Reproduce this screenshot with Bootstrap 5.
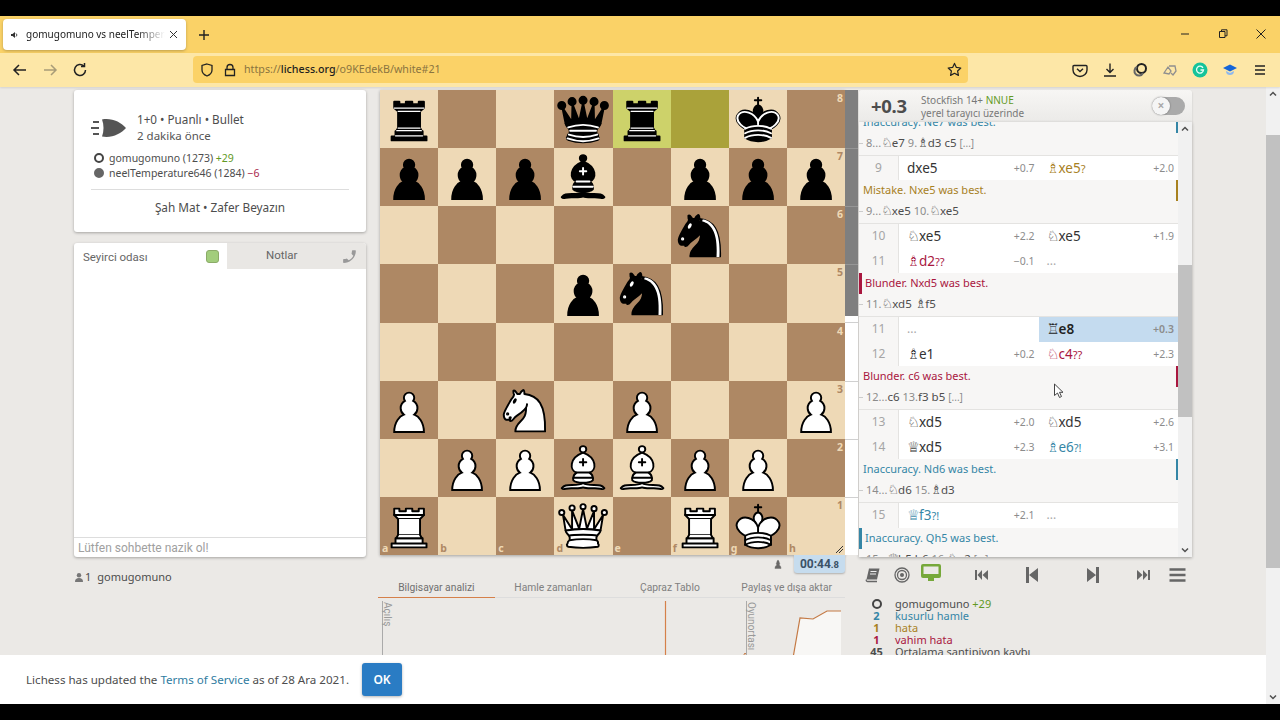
<!DOCTYPE html>
<html lang="tr">
<head>
<meta charset="UTF-8">
<meta name="viewport" content="width=device-width, initial-scale=1.0">
<title>gomugomuno vs neelTemperature646</title>
<link href="https://cdn.jsdelivr.net/npm/bootstrap@5.3.0/dist/css/bootstrap.min.css" rel="stylesheet">
<style>
html,body{margin:0;height:720px;overflow:hidden;background:#000}
body{font-family:"Noto Sans",sans-serif;font-size:12px;color:#4d4d4d}
.win{width:1280px;height:720px;padding:16px 0;background:#000}
/* browser chrome */
.tabbar{height:37px;background:#fad267;padding:3px 3px 0}
.br-tab{width:183px;height:31px;background:#fff;border-radius:4px;box-shadow:0 1px 3px rgba(0,0,0,.25);padding:0 8px;color:#222;font-size:10px}
.br-title{width:139px;overflow:hidden;white-space:nowrap;-webkit-mask-image:linear-gradient(90deg,#000 80%,transparent);mask-image:linear-gradient(90deg,#000 80%,transparent);margin-left:7px;font-size:10px}
.plus{margin-left:11px;width:14px}
.winbtns{margin-left:auto;gap:24px;padding-right:9px}
.winbtns svg{display:block}
.toolbar{height:34px;background:#fde7a7;padding:3px 0 4px 12px;box-shadow:0 1px 2px rgba(0,0,0,.1);position:relative;z-index:2}
.tool-left{width:181px;gap:14px}
.urlbar{width:775px;height:27px;background:#fbd267;border-radius:4px;padding:0 5px 0 6px;font-size:10.7px;color:#8a7440}
.urlbar b{font-weight:500;color:#1e1e1e}
.urltext{margin-left:7px}
.tool-right{margin-left:104px;gap:14px}
.tool-right svg{display:block}
/* page */
.viewport{height:617px}
.pagearea{width:1266px;height:617px;background:#ebe9e6;position:relative;overflow:hidden;padding:3px 0 0 74px}
.pagescroll{width:14px;height:617px;background:#f1f1f1;padding-top:48px;position:relative}
.pagethumb{height:433px;background:#c1c1c1}
.sc-up,.sc-down{position:absolute;left:3px;width:8px;height:8px;line-height:0}
.sc-up{top:3px}.sc-down{bottom:3px}
.col-left{width:292px;margin-right:14px}
.panel{border:0;border-radius:3px;background:#fff;box-shadow:0 1px 3px rgba(0,0,0,.3)}
.meta{height:142px;padding:21px 17px 0}
.meta-head{gap:10px}
.meta-l1{font-size:11.7px;line-height:16px;color:#4d4d4d}
.meta-l2{font-size:11.5px;line-height:17px;color:#555}
.meta-pl{margin-top:7px;font-size:10.5px;line-height:15px;color:#4d4d4d;gap:0}
.dot{display:inline-block;width:10px;height:10px;border-radius:50%;border:2px solid #444;margin:0 5px 0 3px;vertical-align:-1px}
.dot.blk{background:#666;border-color:#666}
.up{color:#629924}.dn{color:#a9284d}
.meta-res{border-top:1px solid #ddd;margin-top:8px;padding-top:9px;text-align:center;font-size:11.8px;color:#4d4d4d}
.chat{height:314px;margin-top:11px}
.chat-tabs{height:26px;font-family:Roboto,sans-serif;font-size:11.5px;color:#666}
.chat-on{width:153px;padding:3px 8px 0 9px}
.chat-on .chk{margin-top:-3px}
.chat-off{flex:1;background:#e9e7e4;padding:0 8px 0 39px;border-top-right-radius:3px}
.chk{width:13px;height:13px;background:#a2cd7c;border:1px solid #8bab68;border-radius:3px}
.chat-body{flex:1}
.chat-in{height:20px;border-top:1px solid #ddd;padding-left:4px;font-family:Roboto,sans-serif;font-size:12px;line-height:20px;color:#a0a0a0}
.watchers{margin-top:12px;font-size:11px;color:#4d4d4d;gap:6px;line-height:16px;padding-left:1px}
.col-mid{width:465px}
.board{display:grid;grid-template-columns:repeat(8,1fr);grid-template-rows:repeat(8,1fr);width:465px;height:465px;box-shadow:0 1px 3px rgba(0,0,0,.3)}
.sq{position:relative;line-height:0}
.sq svg{width:100%;height:100%}
.sq-l{background:#eed9b6}.sq-d{background:#ae8864}
.sq-hl{background:#cdd26a}.sq-hd{background:#aaa23a}
.co{position:absolute;font-size:10.5px;font-weight:700;line-height:11px;font-family:"Noto Sans",sans-serif}
.co-r{right:2px;top:3px}.co-f{left:2px;bottom:1px}
.sq-l .co{color:#ae8864}.sq-d .co{color:#eed9b6}
.sq-hd .co{color:#eed9b6}
.grip{position:absolute;right:1px;bottom:1px}
.clockrow{height:18px;justify-content:flex-end}
.clockbox{width:51px;height:18px;background:#c6dcee;border-radius:0 0 3px 3px;font-family:Roboto,sans-serif;font-weight:700;font-size:12px;color:#3b5166;text-align:center;line-height:18px;box-shadow:0 1px 2px rgba(0,0,0,.25);margin-left:10px}
.clockbox small{font-size:9.5px}
.ub-tabs{margin:7px 0 0 -2px;width:467px;height:18px;border-bottom:1px solid #ddd;font-family:Roboto,sans-serif;font-size:10.3px;color:#808080}
.ub-tab{width:25%;text-align:center;height:18px;line-height:16px}
.ub-tab.on{border-bottom:1px solid #d5804a;color:#6f6f6f}
.chart{display:block;margin-left:-2px}
.col-gauge{width:13px;height:465px;background:#fff;margin-right:1px;position:relative}
.gauge-b{height:226px;background:#7f7f7f}
.gt{position:absolute;left:0;right:0;height:1px;background:rgba(170,170,170,.55)}
.col-right{width:333px}
.ceval{height:32px;background:linear-gradient(#f7f6f4,#ebeae8);padding:0 7px 0 12px;border-radius:3px 3px 0 0;box-shadow:0 1px 2px rgba(0,0,0,.18)}
.pearl{font-size:18.5px;font-weight:700;color:#4d4d4d;width:50px;letter-spacing:-.3px}
.cv-info{font-size:10px;line-height:13px;color:#787878;padding-top:1px}
.cv-info em{font-style:normal;color:#629924}
.toggle{margin-left:auto;width:33px;height:18px;border-radius:9px;background:#aaa;position:relative}
.toggle span{position:absolute;left:0;top:0;width:18px;height:18px;border-radius:50%;background:#f5f5f5;color:#aaa;text-align:center;font-size:12px;line-height:17px;font-weight:700;box-shadow:0 0 2px rgba(0,0,0,.4)}
.mv-wrap{height:435px;box-shadow:0 1px 3px rgba(0,0,0,.3)}
.mv-list{width:319px;height:435px;overflow:hidden;background:#fff}
.mv-bar{width:14px;height:435px;background:#f1f1f1;position:relative;padding-top:143px}
.mv-thumb{height:152px;background:#c1c1c1}
.mv-row{height:24.5px;line-height:24px;font-size:13.5px;color:#333}
.mv-i{width:40px;background:#f7f6f5;border-right:1px solid #e4e3e1;text-align:center;font-size:12px;color:#a5a5a5}
.mv-m{width:139.5px;padding:0 4px 0 8px;justify-content:space-between}
.mv-m i{font-style:normal;font-size:10.5px;color:#8c8c8c}
.mv-m.cur{background:#c4dbef;font-weight:600;color:#222}
.mv-m.dots{color:#aaa;font-size:12px}
.fig{font-family:"DejaVu Sans",sans-serif;font-size:14.5px;font-weight:400;line-height:0;letter-spacing:-1px}
.cur .fig{font-weight:700}
.q{font-size:11px}
.c-in{color:#3586a6}.c-mi{color:#a8811f}.c-bl{color:#a9173f}
.cm{height:44px;background:#f7f6f5;border-bottom:1px solid #e4e3e1;font-size:11px}
.cm-first{margin-top:-10.5px}
.cm-note{height:21px;line-height:20px;padding-left:4px}
.cm-note.lb{border-left:3px solid;padding-left:3px}
.cm-note.rb{border-right:2px solid}
.cm-var{position:relative;padding-left:7px;line-height:20px;font-size:11.5px;color:#4d4d4d}
.cm-var::before{content:"";position:absolute;left:0;top:10px;width:4px;height:1px;background:#ccc}
.cm-var span.n{color:#8c8c8c;font-size:11px}
.cm-var span.o{color:#8c8c8c;font-size:10px}
.cm-var .fig{font-size:13px}
.ctrl{height:35px;padding:0 5px 0 6px;margin-top:1px;width:319px;position:relative}
.ctrl svg{position:absolute;top:9px}
.summary{padding:5px 0 0 11px;font-size:11px;line-height:12px;height:70px;overflow:hidden}
.sum-n{width:13px;margin-right:12px;text-align:center;font-weight:700;flex:none}
.banner{position:absolute;left:0;right:0;bottom:0;height:49px;background:#fff;padding-left:26px;font-size:11.6px;color:#4d4d4d;z-index:5}
.banner a{color:#2f7c9f;text-decoration:none}
.ok-btn{margin-left:13px;width:40px;height:33px;padding:0;font-size:12px;font-weight:600;background:#2a7cc4;border:0;border-radius:3px;box-shadow:0 1px 3px rgba(0,0,0,.3)}
.pointer{position:absolute;left:1053px;top:296px;z-index:4;line-height:0}
</style>
</head>
<body>
<svg width="0" height="0" class="position-absolute">
<defs>
<g id="wP"><path d="M22.500 9c-2.210 0-4 1.790-4 4 0 .89.290 1.710.780 2.380C17.330 16.500 16 18.590 16 21c0 2.030.940 3.840 2.410 5.030-3 1.060-7.410 5.550-7.410 13.470h23c0-7.920-4.410-12.410-7.410-13.470 1.470-1.190 2.410-3 2.410-5.030 0-2.410-1.330-4.500-3.280-5.620.49-.67.780-1.490.780-2.380 0-2.210-1.790-4-4-4z" fill="#fff" stroke="#000" stroke-width="1.500" stroke-linecap="round"/></g>
<g id="bP"><path d="M22.500 9c-2.210 0-4 1.790-4 4 0 .89.290 1.710.780 2.380C17.330 16.500 16 18.590 16 21c0 2.030.940 3.840 2.410 5.030-3 1.060-7.410 5.550-7.410 13.470h23c0-7.920-4.410-12.410-7.410-13.470 1.470-1.190 2.410-3 2.410-5.030 0-2.410-1.330-4.500-3.280-5.620.49-.67.780-1.490.780-2.380 0-2.210-1.790-4-4-4z" fill="#000" stroke="#000" stroke-width="1.500" stroke-linecap="round"/></g>
<g id="wR" fill="#fff" fill-rule="evenodd" stroke="#000" stroke-width="1.500" stroke-linecap="round" stroke-linejoin="round">
<path d="M9 39h27v-3H9v3zM12 36v-4h21v4H12zM11 14V9h4v2h5V9h5v2h5V9h4v5" stroke-linecap="butt"/>
<path d="M34 14l-3 3H14l-3-3"/><path d="M31 17v12.500H14V17" stroke-linecap="butt" stroke-linejoin="miter"/>
<path d="M31 29.500l1.500 2.500h-20l1.500-2.500"/><path d="M11 14h23" fill="none" stroke-linejoin="miter"/></g>
<g id="bR" fill="#000" fill-rule="evenodd" stroke="#000" stroke-width="1.500" stroke-linecap="round" stroke-linejoin="round">
<path d="M9 39h27v-3H9v3zM12.500 32l1.500-2.500h17l1.500 2.500h-20zM12 36v-4h21v4H12z" stroke-linecap="butt"/>
<path d="M14 29.500v-13h17v13H14z" stroke-linecap="butt" stroke-linejoin="miter"/>
<path d="M14 16.500L11 14h23l-3 2.500H14zM11 14V9h4v2h5V9h5v2h5V9h4v5H11z" stroke-linecap="butt"/>
<path d="M12 35.500h21M13 31.500h19M14 29.500h17M14 16.500h17M11 14h23" fill="none" stroke="#fff" stroke-width="1" stroke-linejoin="miter"/></g>
<g id="wN" fill="none" fill-rule="evenodd" stroke="#000" stroke-width="1.500" stroke-linecap="round" stroke-linejoin="round">
<path d="M22 10c10.500 1 16.500 8 16 29H15c0-9 10-6.500 8-21" fill="#fff"/>
<path d="M24 18c.38 2.910-5.550 7.370-8 9-3 2-2.820 4.340-5 4-1.042-.94 1.410-3.040 0-3-1 0 .19 1.230-1 2-1 0-4.003 1-4-4 0-2 6-12 6-12s1.890-1.900 2-3.500c-.73-.994-.5-2-.5-3 1-1 3 2.500 3 2.500h2s.78-1.992 2.500-3c1 0 1 3 1 3" fill="#fff"/>
<path d="M9.500 25.500a.5.5 0 1 1-1 0 .5.5 0 1 1 1 0z" fill="#000"/>
<path d="M15 15.500a.5 1.500 0 1 1-1 0 .5 1.500 0 1 1 1 0z" transform="rotate(30 14.500 15.500)" fill="#000"/></g>
<g id="bN" fill="none" fill-rule="evenodd" stroke="#000" stroke-width="1.500" stroke-linecap="round" stroke-linejoin="round">
<path d="M22 10c10.500 1 16.500 8 16 29H15c0-9 10-6.500 8-21" fill="#000"/>
<path d="M24 18c.38 2.910-5.550 7.370-8 9-3 2-2.820 4.340-5 4-1.042-.94 1.410-3.040 0-3-1 0 .19 1.230-1 2-1 0-4.003 1-4-4 0-2 6-12 6-12s1.890-1.900 2-3.500c-.73-.994-.5-2-.5-3 1-1 3 2.500 3 2.500h2s.78-1.992 2.500-3c1 0 1 3 1 3" fill="#000"/>
<path d="M9.500 25.500a.5.5 0 1 1-1 0 .5.5 0 1 1 1 0z" fill="#fff" stroke="#fff"/>
<path d="M15 15.500a.5 1.500 0 1 1-1 0 .5 1.500 0 1 1 1 0z" transform="rotate(30 14.500 15.500)" fill="#fff" stroke="#fff"/>
<path d="M24.550 10.400l-.45 1.450.5.15c3.150 1 5.650 2.490 7.900 6.750S35.750 29.060 35.250 39l-.05.5h2.250l.05-.5c.5-10.060-.88-16.850-3.250-21.340-2.370-4.490-5.790-6.640-9.190-7.160l-.51-.1z" fill="#fff" stroke="none"/></g>
<g id="wB" fill="none" fill-rule="evenodd" stroke="#000" stroke-width="1.500" stroke-linecap="round" stroke-linejoin="round">
<g fill="#fff" stroke-linecap="butt">
<path d="M9 36c3.390-.97 10.110.43 13.500-2 3.390 2.430 10.110 1.030 13.500 2 0 0 1.650.54 3 2-.68.97-1.650.99-3 .5-3.390-.97-10.110.46-13.500-1-3.390 1.460-10.110.03-13.500 1-1.350.49-2.320.47-3-.5 1.350-1.460 3-2 3-2z"/>
<path d="M15 32c2.500 2.500 12.500 2.500 15 0 .5-1.500 0-2 0-2 0-2.500-2.500-4-2.500-4 5.500-1.500 6-11.500-5-15.500-11 4-10.500 14-5 15.500 0 0-2.500 1.500-2.500 4 0 0-.5.5 0 2z"/>
<path d="M25 8a2.500 2.500 0 1 1-5 0 2.500 2.500 0 1 1 5 0z"/></g>
<path d="M17.500 26h10M15 30h15m-7.500-14.500v5M20 18h5" stroke-linejoin="miter"/></g>
<g id="bB" fill="none" fill-rule="evenodd" stroke="#000" stroke-width="1.500" stroke-linecap="round" stroke-linejoin="round">
<g fill="#000" stroke-linecap="butt">
<path d="M9 36c3.390-.97 10.110.43 13.500-2 3.390 2.430 10.110 1.030 13.500 2 0 0 1.650.54 3 2-.68.97-1.650.99-3 .5-3.390-.97-10.110.46-13.500-1-3.390 1.460-10.110.03-13.500 1-1.350.49-2.320.47-3-.5 1.350-1.460 3-2 3-2z"/>
<path d="M15 32c2.500 2.500 12.500 2.500 15 0 .5-1.500 0-2 0-2 0-2.500-2.500-4-2.500-4 5.500-1.500 6-11.500-5-15.500-11 4-10.500 14-5 15.500 0 0-2.500 1.500-2.500 4 0 0-.5.5 0 2z"/>
<path d="M25 8a2.500 2.500 0 1 1-5 0 2.500 2.500 0 1 1 5 0z"/></g>
<path d="M17.500 26h10M15 30h15m-7.500-14.500v5M20 18h5" stroke="#fff" stroke-linejoin="miter"/></g>
<g id="wQ" fill="#fff" fill-rule="evenodd" stroke="#000" stroke-width="1.500" stroke-linejoin="round">
<path d="M8 12a2 2 0 1 1-4 0 2 2 0 1 1 4 0zm16.500-4.500a2 2 0 1 1-4 0 2 2 0 1 1 4 0zM41 12a2 2 0 1 1-4 0 2 2 0 1 1 4 0zM16 8.500a2 2 0 1 1-4 0 2 2 0 1 1 4 0zM33 9a2 2 0 1 1-4 0 2 2 0 1 1 4 0z"/>
<path d="M9 26c8.500-1.500 21-1.500 27 0l2-12-7 11V11l-5.500 13.500-3-15-3 15-5.500-14V25L7 14l2 12z" stroke-linecap="butt"/>
<path d="M9 26c0 2 1.500 2 2.500 4 1 1.500 1 1 .5 3.500-1.500 1-1.500 2.500-1.500 2.500-1.500 1.500.5 2.500.5 2.500 6.500 1 16.500 1 23 0 0 0 1.500-1 0-2.500 0 0 .5-1.500-1-2.500-.5-2.500-.5-2 .5-3.500 1-2 2.500-2 2.500-4-8.500-1.500-18.500-1.500-27 0z" stroke-linecap="butt"/>
<path d="M11.500 30c3.500-1 18.500-1 22 0M12 33.500c6-1 15-1 21 0" fill="none"/></g>
<g id="bQ" fill="#000" fill-rule="evenodd" stroke="#000" stroke-width="1.500" stroke-linecap="round" stroke-linejoin="round">
<circle cx="6" cy="12" r="2.750"/><circle cx="14" cy="9" r="2.750"/><circle cx="22.500" cy="8" r="2.750"/><circle cx="31" cy="9" r="2.750"/><circle cx="39" cy="12" r="2.750"/>
<path d="M9 26c8.500-1.500 21-1.500 27 0l2.500-12.500L31 25l-.3-14.100-5.200 13.600-3-14.500-3 14.500-5.200-13.600L14 25 6.500 13.500 9 26z" stroke-linecap="butt"/>
<path d="M9 26c0 2 1.500 2 2.500 4 1 1.500 1 1 .5 3.500-1.500 1-1.500 2.500-1.500 2.500-1.500 1.500.5 2.500.5 2.500 6.500 1 16.500 1 23 0 0 0 1.500-1 0-2.500 0 0 .5-1.500-1-2.500-.5-2.500-.5-2 .5-3.500 1-2 2.500-2 2.500-4-8.500-1.500-18.500-1.500-27 0z" stroke-linecap="butt"/>
<path d="M11 38.500a35 35 1 0 0 23 0" fill="none" stroke-linecap="butt"/>
<path d="M11 29a35 35 1 0 1 23 0M12.500 31.500h20M11.500 34.500a35 35 1 0 0 22 0M10.500 37.500a35 35 1 0 0 24 0" fill="none" stroke="#fff"/></g>
<g id="wK" fill="none" fill-rule="evenodd" stroke="#000" stroke-width="1.500" stroke-linecap="round" stroke-linejoin="round">
<path d="M22.500 11.630V6M20 8h5" stroke-linejoin="miter"/>
<path d="M22.500 25s4.500-7.500 3-10.500c0 0-1-2.500-3-2.500s-3 2.500-3 2.500c-1.500 3 3 10.500 3 10.500" fill="#fff" stroke-linecap="butt" stroke-linejoin="miter"/>
<path d="M12.500 37c5.500 3.500 14.500 3.500 20 0v-7s9-4.500 6-10.500c-4-6.500-13.500-3.500-16 4V27v-3.500c-2.500-7.500-12-10.500-16-4-3 6 6 10.500 6 10.500v7" fill="#fff"/>
<path d="M12.500 30c5.500-3 14.500-3 20 0m-20 3.500c5.500-3 14.500-3 20 0m-20 3.500c5.500-3 14.500-3 20 0"/></g>
<g id="bK" fill="none" fill-rule="evenodd" stroke="#000" stroke-width="1.500" stroke-linecap="round" stroke-linejoin="round">
<path d="M22.500 11.630V6" stroke-linejoin="miter"/>
<path d="M22.500 25s4.500-7.500 3-10.500c0 0-1-2.500-3-2.500s-3 2.500-3 2.500c-1.500 3 3 10.500 3 10.500" fill="#000" stroke-linecap="butt" stroke-linejoin="miter"/>
<path d="M12.500 37c5.500 3.500 14.500 3.500 20 0v-7s9-4.500 6-10.500c-4-6.500-13.500-3.500-16 4V27v-3.500c-2.500-7.500-12-10.500-16-4-3 6 6 10.500 6 10.500v7" fill="#000"/>
<path d="M20 8h5" stroke-linejoin="miter"/>
<path d="M32 29.500s8.500-4 6.030-9.650C34.150 14 25 18 22.500 24.500v2.100-2.100C20 18 10.850 14 6.970 19.850 4.500 25.500 13 29.500 13 29.500" stroke="#fff"/>
<path d="M12.500 30c5.500-3 14.500-3 20 0m-20 3.500c5.500-3 14.500-3 20 0m-20 3.500c5.500-3 14.500-3 20 0" stroke="#fff"/></g>
</defs>
</svg>

<div class="win">
  <!-- browser tabs -->
  <div class="tabbar d-flex align-items-start">
    <div class="br-tab d-flex align-items-center">
      <svg width="8" height="8" viewBox="0 0 8 8"><path d="M0 3h1.500L4 1v6L1.500 5H0z" fill="#333"/><path d="M5 2.500c1 .8 1 2.200 0 3" fill="none" stroke="#333"/></svg>
      <span class="br-title">gomugomuno vs neelTemperature646</span>
      <svg class="ms-auto" width="9" height="9" viewBox="0 0 9 9"><path d="M1 1l7 7M8 1L1 8" stroke="#333" stroke-width="1"/></svg>
    </div>
    <svg class="plus" style="margin-top:9px" width="14" height="14" viewBox="0 0 14 14"><path d="M7 2v10M2 7h10" stroke="#222" stroke-width="1.400"/></svg>
    <div class="winbtns d-flex" style="margin-top:10px">
      <svg width="14" height="10" viewBox="0 0 14 10"><path d="M3 5h8" stroke="#222"/></svg>
      <svg width="14" height="10" viewBox="0 0 14 10"><path d="M3.500 2.500h5.500v6H3.500zM5.500 2.500V.8h5.500v6H9" fill="none" stroke="#222"/></svg>
      <svg width="14" height="10" viewBox="0 0 14 10"><path d="M2.500 .5l9 9M11.500 .5l-9 9" stroke="#222"/></svg>
    </div>
  </div>
  <!-- navigation toolbar -->
  <div class="toolbar d-flex align-items-center">
    <div class="tool-left d-flex">
      <svg width="16" height="16" viewBox="0 0 16 16"><path d="M14 8H2M7 3L2 8l5 5" fill="none" stroke="#222" stroke-width="1.500"/></svg>
      <svg width="16" height="16" viewBox="0 0 16 16"><path d="M2 8h12M9 3l5 5-5 5" fill="none" stroke="#a89c78" stroke-width="1.500"/></svg>
      <svg width="16" height="16" viewBox="0 0 16 16"><path d="M13.500 8a5.500 5.500 0 1 1-1.700-4M12.500 1v3.500H9" fill="none" stroke="#222" stroke-width="1.500"/></svg>
    </div>
    <div class="urlbar d-flex align-items-center">
      <svg width="16" height="16" viewBox="0 0 16 16"><path d="M8 2l5 1.500V8c0 3-2.500 5-5 6-2.500-1-5-3-5-6V3.500z" fill="none" stroke="#222" stroke-width="1.300"/></svg>
      <svg class="ms-2" width="14" height="14" viewBox="0 0 14 14"><path d="M4 6.500V4.500a3 3 0 0 1 6 0v2M2.500 6.500h9v6h-9z" fill="none" stroke="#222" stroke-width="1.300"/></svg>
      <span class="urltext">https://<b>lichess.org</b>/o9KEdekB/white#21</span>
      <svg class="ms-auto" style="margin-right:1px" width="15" height="15" viewBox="0 0 16 16"><path d="M8 1.500l2 4.300 4.700.6-3.400 3.200.9 4.700L8 12l-4.200 2.300.9-4.700L1.300 6.400 6 5.800z" fill="none" stroke="#222" stroke-width="1.300" stroke-linejoin="round"/></svg>
    </div>
    <div class="tool-right d-flex align-items-center">
      <svg width="16" height="16" viewBox="0 0 16 16"><path d="M2 3.500h12a1 1 0 0 1 1 1V8a7 6.500 0 0 1-14 0V4.500a1 1 0 0 1 1-1z" fill="none" stroke="#222" stroke-width="1.400"/><path d="M5 6.800l3 2.800 3-2.800" fill="none" stroke="#222" stroke-width="1.400"/></svg>
      <svg width="16" height="16" viewBox="0 0 16 16"><path d="M8 1.500v9M4.500 7L8 10.500 11.500 7M2 14h12" fill="none" stroke="#222" stroke-width="1.400"/></svg>
      <svg width="16" height="16" viewBox="0 0 16 16"><circle cx="9.500" cy="6.500" r="4.500" fill="none" stroke="#222" stroke-width="2"/><path d="M5 5a4.500 4.500 0 1 0 6 6" fill="none" stroke="#666" stroke-width="2"/></svg>
      <svg width="16" height="16" viewBox="0 0 16 16"><path d="M2 11l4-6 3 4-2 3zM7 4l6 0 1 5-3 4-2-2" fill="none" stroke="#8f8f8f" stroke-width="1.300"/></svg>
      <svg width="16" height="16" viewBox="0 0 16 16"><circle cx="8" cy="8" r="7.500" fill="#15c39a"/><path d="M11 5.800a3.500 3.500 0 1 0 .5 2.200H8.500" fill="none" stroke="#e8fff8" stroke-width="1.300"/></svg>
      <svg width="16" height="16" viewBox="0 0 16 16"><path d="M1 6l7-3.500L15 6 8 9.500z" fill="#1565d8"/><path d="M4 9c0 3 2 4 4 4s4-1 4-4l-4 2z" fill="#8db8ef"/></svg>
      <svg width="16" height="16" viewBox="0 0 16 16"><path d="M3 4h10M3 8h10M3 12h10" stroke="#222" stroke-width="1.500"/></svg>
    </div>
  </div>

  <div class="viewport d-flex">
    <div class="pagearea d-flex align-items-start">
      <!-- game info, chat -->
      <div class="col-left d-flex flex-column">
        <div class="card panel meta">
          <div class="meta-head d-flex align-items-center">
            <svg width="36" height="24" viewBox="0 0 36 24"><path d="M11 3.500C20 1.500 30 6 35 12 30 18 20 22.500 11 20.500c2-5 2-12 0-17z" fill="#555"/><path d="M2 6h6M0 12h8M2 18h6" stroke="#555" stroke-width="2"/></svg>
            <div>
              <div class="meta-l1">1+0 • Puanlı • Bullet</div>
              <div class="meta-l2">2 dakika önce</div>
            </div>
          </div>
          <div class="meta-pl d-flex flex-column">
            <div><span class="dot"></span>gomugomuno (1273) <span class="up">+29</span></div>
            <div><span class="dot blk"></span>neelTemperature646 (1284) <span class="dn">−6</span></div>
          </div>
          <div class="meta-res">Şah Mat • Zafer Beyazın</div>
        </div>
        <div class="card panel chat d-flex flex-column">
          <div class="chat-tabs d-flex">
            <div class="chat-on d-flex align-items-center justify-content-between">
              <span>Seyirci odası</span><span class="chk"></span>
            </div>
            <div class="chat-off d-flex align-items-center justify-content-between">
              <span>Notlar</span>
              <svg width="17" height="17" viewBox="0 0 24 24"><path transform="matrix(-1 0 0 1 24 0)" d="M6.600 10.800c1.400 2.800 3.800 5.100 6.600 6.600l2.200-2.200c.3-.3.7-.4 1-.2 1.100.4 2.300.6 3.600.6.6 0 1 .4 1 1V20c0 .6-.4 1-1 1C10.600 21 3 13.400 3 4c0-.6.4-1 1-1h3.500c.6 0 1 .4 1 1 0 1.300.2 2.500.6 3.600.1.300 0 .7-.2 1z" fill="#999"/></svg>
            </div>
          </div>
          <div class="chat-body"></div>
          <div class="chat-in">Lütfen sohbette nazik ol!</div>
        </div>
        <div class="watchers d-flex align-items-center">
          <span class="d-flex align-items-center" style="gap:2px"><svg width="8" height="9" viewBox="0 0 8 9"><circle cx="4" cy="2.300" r="2.200" fill="#777"/><path d="M0 9c0-3 1.500-4 4-4s4 1 4 4z" fill="#777"/></svg>1</span>
          <span>gomugomuno</span>
        </div>
      </div>

      <!-- board and underboard -->
      <div class="col-mid">
        <div class="board" id="board"></div>
        <div class="clockrow d-flex align-items-center">
          <svg width="12" height="14" viewBox="0 0 45 45"><use href="#bP" style="opacity:.55"/></svg>
          <div class="clockbox">00:44<small>.8</small></div>
        </div>
        <div class="ub-tabs d-flex">
          <div class="ub-tab on">Bilgisayar analizi</div>
          <div class="ub-tab">Hamle zamanları</div>
          <div class="ub-tab">Çapraz Tablo</div>
          <div class="ub-tab">Paylaş ve dışa aktar</div>
        </div>
        <svg class="chart" width="467" height="60" viewBox="0 0 467 60">
          <path d="M415 60L422 20 435 21 449 13 463 13V60z" fill="#f8f7f5"/>
          <path d="M415 60L422 20 435 21 449 13 463 13" fill="none" stroke="#c47a45" stroke-width="1.200"/>
          <path d="M364 60l3-5 4 5" fill="none" stroke="#c47a45"/>
          <path d="M4.500 3V60M368.500 3V60" stroke="#aaa"/>
          <path d="M287.500 3V60" stroke="#d5804a" stroke-width="1.200"/>
          <text transform="translate(6 4) rotate(90)" font-family="Roboto, sans-serif" font-size="10" fill="#999">Açılış</text>
          <text transform="translate(370 4) rotate(90)" font-family="Roboto, sans-serif" font-size="10" fill="#999">Oyunortası</text>
        </svg>
      </div>

      <!-- eval gauge -->
      <div class="col-gauge">
        <div class="gauge-b"></div>
        <div class="gt" style="top:58px"></div><div class="gt" style="top:116px"></div><div class="gt" style="top:174px"></div>
        <div class="gt" style="top:232px"></div><div class="gt" style="top:291px"></div><div class="gt" style="top:349px"></div><div class="gt" style="top:407px"></div>
      </div>

      <!-- analysis -->
      <div class="col-right">
        <div class="ceval d-flex align-items-center">
          <div class="pearl">+0.3</div>
          <div class="cv-info">
            <div>Stockfish 14+ <em>NNUE</em></div>
            <div>yerel tarayıcı üzerinde</div>
          </div>
          <div class="toggle"><span>×</span></div>
        </div>
        <div class="mv-wrap d-flex">
          <div class="mv-list">
            <div class="cm cm-first">
              <div class="cm-note rb c-in">Inaccuracy. Ne7 was best.</div>
              <div class="cm-var"><span class="n">8...</span><span class="fig">♘</span>e7 <span class="n">9.</span><span class="fig">♗</span>d3 c5 <span class="o">[...]</span></div>
            </div>
            <div class="mv-row d-flex">
              <div class="mv-i">9</div>
              <div class="mv-m d-flex"><span>dxe5</span><i>+0.7</i></div>
              <div class="mv-m d-flex"><span class="c-mi"><span class="fig">♗</span>xe5<span class="q">?</span></span><i>+2.0</i></div>
            </div>
            <div class="cm">
              <div class="cm-note rb c-mi">Mistake. Nxe5 was best.</div>
              <div class="cm-var"><span class="n">9...</span><span class="fig">♘</span>xe5 <span class="n">10.</span><span class="fig">♘</span>xe5</div>
            </div>
            <div class="mv-row d-flex">
              <div class="mv-i">10</div>
              <div class="mv-m d-flex"><span><span class="fig">♘</span>xe5</span><i>+2.2</i></div>
              <div class="mv-m d-flex"><span><span class="fig">♘</span>xe5</span><i>+1.9</i></div>
            </div>
            <div class="mv-row d-flex">
              <div class="mv-i">11</div>
              <div class="mv-m d-flex"><span class="c-bl"><span class="fig">♗</span>d2<span class="q">??</span></span><i>−0.1</i></div>
              <div class="mv-m dots d-flex"><span>...</span></div>
            </div>
            <div class="cm">
              <div class="cm-note lb c-bl">Blunder. Nxd5 was best.</div>
              <div class="cm-var"><span class="n">11.</span><span class="fig">♘</span>xd5 <span class="fig">♗</span>f5</div>
            </div>
            <div class="mv-row d-flex">
              <div class="mv-i">11</div>
              <div class="mv-m dots d-flex"><span>...</span></div>
              <div class="mv-m cur d-flex"><span><span class="fig">♖</span>e8</span><i>+0.3</i></div>
            </div>
            <div class="mv-row d-flex">
              <div class="mv-i">12</div>
              <div class="mv-m d-flex"><span><span class="fig">♗</span>e1</span><i>+0.2</i></div>
              <div class="mv-m d-flex"><span class="c-bl"><span class="fig">♘</span>c4<span class="q">??</span></span><i>+2.3</i></div>
            </div>
            <div class="cm">
              <div class="cm-note rb c-bl">Blunder. c6 was best.</div>
              <div class="cm-var"><span class="n">12...</span>c6 <span class="n">13.</span>f3 b5 <span class="o">[...]</span></div>
            </div>
            <div class="mv-row d-flex">
              <div class="mv-i">13</div>
              <div class="mv-m d-flex"><span><span class="fig">♘</span>xd5</span><i>+2.0</i></div>
              <div class="mv-m d-flex"><span><span class="fig">♘</span>xd5</span><i>+2.6</i></div>
            </div>
            <div class="mv-row d-flex">
              <div class="mv-i">14</div>
              <div class="mv-m d-flex"><span><span class="fig">♕</span>xd5</span><i>+2.3</i></div>
              <div class="mv-m d-flex"><span class="c-in"><span class="fig">♗</span>e6<span class="q">?!</span></span><i>+3.1</i></div>
            </div>
            <div class="cm">
              <div class="cm-note rb c-in">Inaccuracy. Nd6 was best.</div>
              <div class="cm-var"><span class="n">14...</span><span class="fig">♘</span>d6 <span class="n">15.</span><span class="fig">♗</span>d3</div>
            </div>
            <div class="mv-row d-flex">
              <div class="mv-i">15</div>
              <div class="mv-m d-flex"><span class="c-in"><span class="fig">♕</span>f3<span class="q">?!</span></span><i>+2.1</i></div>
              <div class="mv-m dots d-flex"><span>...</span></div>
            </div>
            <div class="cm">
              <div class="cm-note lb c-in">Inaccuracy. Qh5 was best.</div>
              <div class="cm-var"><span class="n">15...</span><span class="fig">♕</span>h5 h6 <span class="n">16.</span><span class="fig">♘</span>e2 <span class="o">[...]</span></div>
            </div>
          </div>
          <div class="mv-bar">
            <svg class="sc-up" viewBox="0 0 8 8"><path d="M1 5.500l3-3 3 3" fill="none" stroke="#505050" stroke-width="1.500"/></svg>
            <div class="mv-thumb"></div>
            <svg class="sc-down" viewBox="0 0 8 8"><path d="M1 2.500l3 3 3-3" fill="none" stroke="#505050" stroke-width="1.500"/></svg>
          </div>
        </div>
        <!-- analysis controls -->
        <div class="ctrl">
          <svg style="left:6px" width="16" height="16" viewBox="0 0 16 16"><path d="M4 1.500h10.500L12 12.500H1.500z" fill="#666"/><path d="M1.500 12.500c-.5 1-.3 2 1 2h9.500" fill="none" stroke="#666" stroke-width="1.300"/><path d="M5.500 4.500h6M5 7h6" stroke="#eee"/></svg>
          <svg style="left:35px" width="16" height="16" viewBox="0 0 16 16"><circle cx="8" cy="8" r="7" fill="none" stroke="#666" stroke-width="1.300"/><circle cx="8" cy="8" r="4.500" fill="none" stroke="#666" stroke-width="1.300"/><circle cx="8" cy="8" r="2" fill="#666"/></svg>
          <svg style="left:62px;top:6px" width="20" height="18" viewBox="0 0 20 18"><path d="M2 0h16a2 2 0 0 1 2 2v10a2 2 0 0 1-2 2H2a2 2 0 0 1-2-2V2a2 2 0 0 1 2-2z" fill="#76a83a"/><path d="M2.500 2.500h15v7.500h-15z" fill="#ebe9e6"/><path d="M7 14h6v3H7z" fill="#76a83a"/></svg>
          <svg style="left:115px" width="15" height="16" viewBox="0 0 15 16"><path d="M1 3h2v10H1zM8 3L3.500 8 8 13zM14 3L8.500 8 14 13z" fill="#666"/></svg>
          <svg style="left:166px;top:8px" width="14" height="18" viewBox="0 0 14 18"><path d="M1 1h3v16H1zM13 2v14L4 9z" fill="#666"/></svg>
          <svg style="left:227px;top:8px" width="14" height="18" viewBox="0 0 14 18"><path d="M10 1h3v16h-3zM1 2v14l9-7z" fill="#666"/></svg>
          <svg style="left:277px" width="15" height="16" viewBox="0 0 15 16"><path d="M12 3h2v10h-2zM7 3l4.500 5L7 13zM1 3l5.500 5L1 13z" fill="#666"/></svg>
          <svg style="left:310px" width="17" height="16" viewBox="0 0 16 16"><path d="M0 2.500h16M0 8h16M0 13.500h16" stroke="#666" stroke-width="2.600"/></svg>
        </div>
        <div class="summary">
          <div class="d-flex align-items-center"><span class="sum-n"><span class="dot m-0"></span></span><span>gomugomuno <span class="up">+29</span></span></div>
          <div class="d-flex c-in"><span class="sum-n">2</span><span>kusurlu hamle</span></div>
          <div class="d-flex c-mi"><span class="sum-n">1</span><span>hata</span></div>
          <div class="d-flex c-bl"><span class="sum-n">1</span><span>vahim hata</span></div>
          <div class="d-flex"><span class="sum-n">45</span><span>Ortalama santipiyon kaybı</span></div>
        </div>
      </div>

      <svg class="pointer" width="12" height="16" viewBox="0 0 12 16"><path d="M1.500 1v11.500l3-2.500 2 4.500 2-1-2-4.200h3.500z" fill="#fff" stroke="#444"/></svg>

      <!-- terms notice -->
      <div class="banner d-flex align-items-center">
        <span>Lichess has updated the <a href="#">Terms of Service</a> as of 28 Ara 2021.</span>
        <button class="btn btn-primary ok-btn">OK</button>
      </div>
    </div>
    <div class="pagescroll">
      <svg class="sc-up" viewBox="0 0 8 8"><path d="M1 5.500l3-3 3 3" fill="none" stroke="#505050" stroke-width="1.500"/></svg>
      <div class="pagethumb"></div>
      <svg class="sc-down" viewBox="0 0 8 8"><path d="M1 2.500l3 3 3-3" fill="none" stroke="#505050" stroke-width="1.500"/></svg>
    </div>
  </div>
</div>

<script src="https://cdn.jsdelivr.net/npm/bootstrap@5.3.0/dist/js/bootstrap.bundle.min.js"></script>
<script>
    // position from the game, ranks 8 to 1
    const ranks = ['r..qr.k.', 'pppb.ppp', '.....n..', '...pn...', '........', 'P.N.P..P', '.PPBBPP.', 'R..Q.RK.'];
    const board = document.getElementById('board');
    ranks.forEach((row, r) => {
        [...row].forEach((ch, f) => {
            const sq = document.createElement('div');
            const light = (r + f) % 2 === 0;
            let cls = light ? 'sq-l' : 'sq-d';
            if (r === 0 && f === 4) cls += ' sq-hl';
            if (r === 0 && f === 5) cls += ' sq-hd';
            sq.className = 'sq ' + cls;
            let html = '';
            if (ch !== '.') {
                const id = (ch === ch.toUpperCase() ? 'w' : 'b') + ch.toUpperCase();
                html += '<svg viewBox="0 0 45 45"><use href="#' + id + '"/></svg>';
            }
            if (f === 7) html += '<span class="co co-r">' + (8 - r) + '</span>';
            if (r === 7) html += '<span class="co co-f">' + 'abcdefgh'[f] + '</span>';
            if (r === 7 && f === 7) html += '<svg class="grip" style="width:9px;height:9px" viewBox="0 0 9 9"><path d="M1 8l7-7M4 8l4-4" stroke="#333"/></svg>';
            sq.innerHTML = html;
            board.appendChild(sq);
        });
    });
</script>
</body>
</html>
